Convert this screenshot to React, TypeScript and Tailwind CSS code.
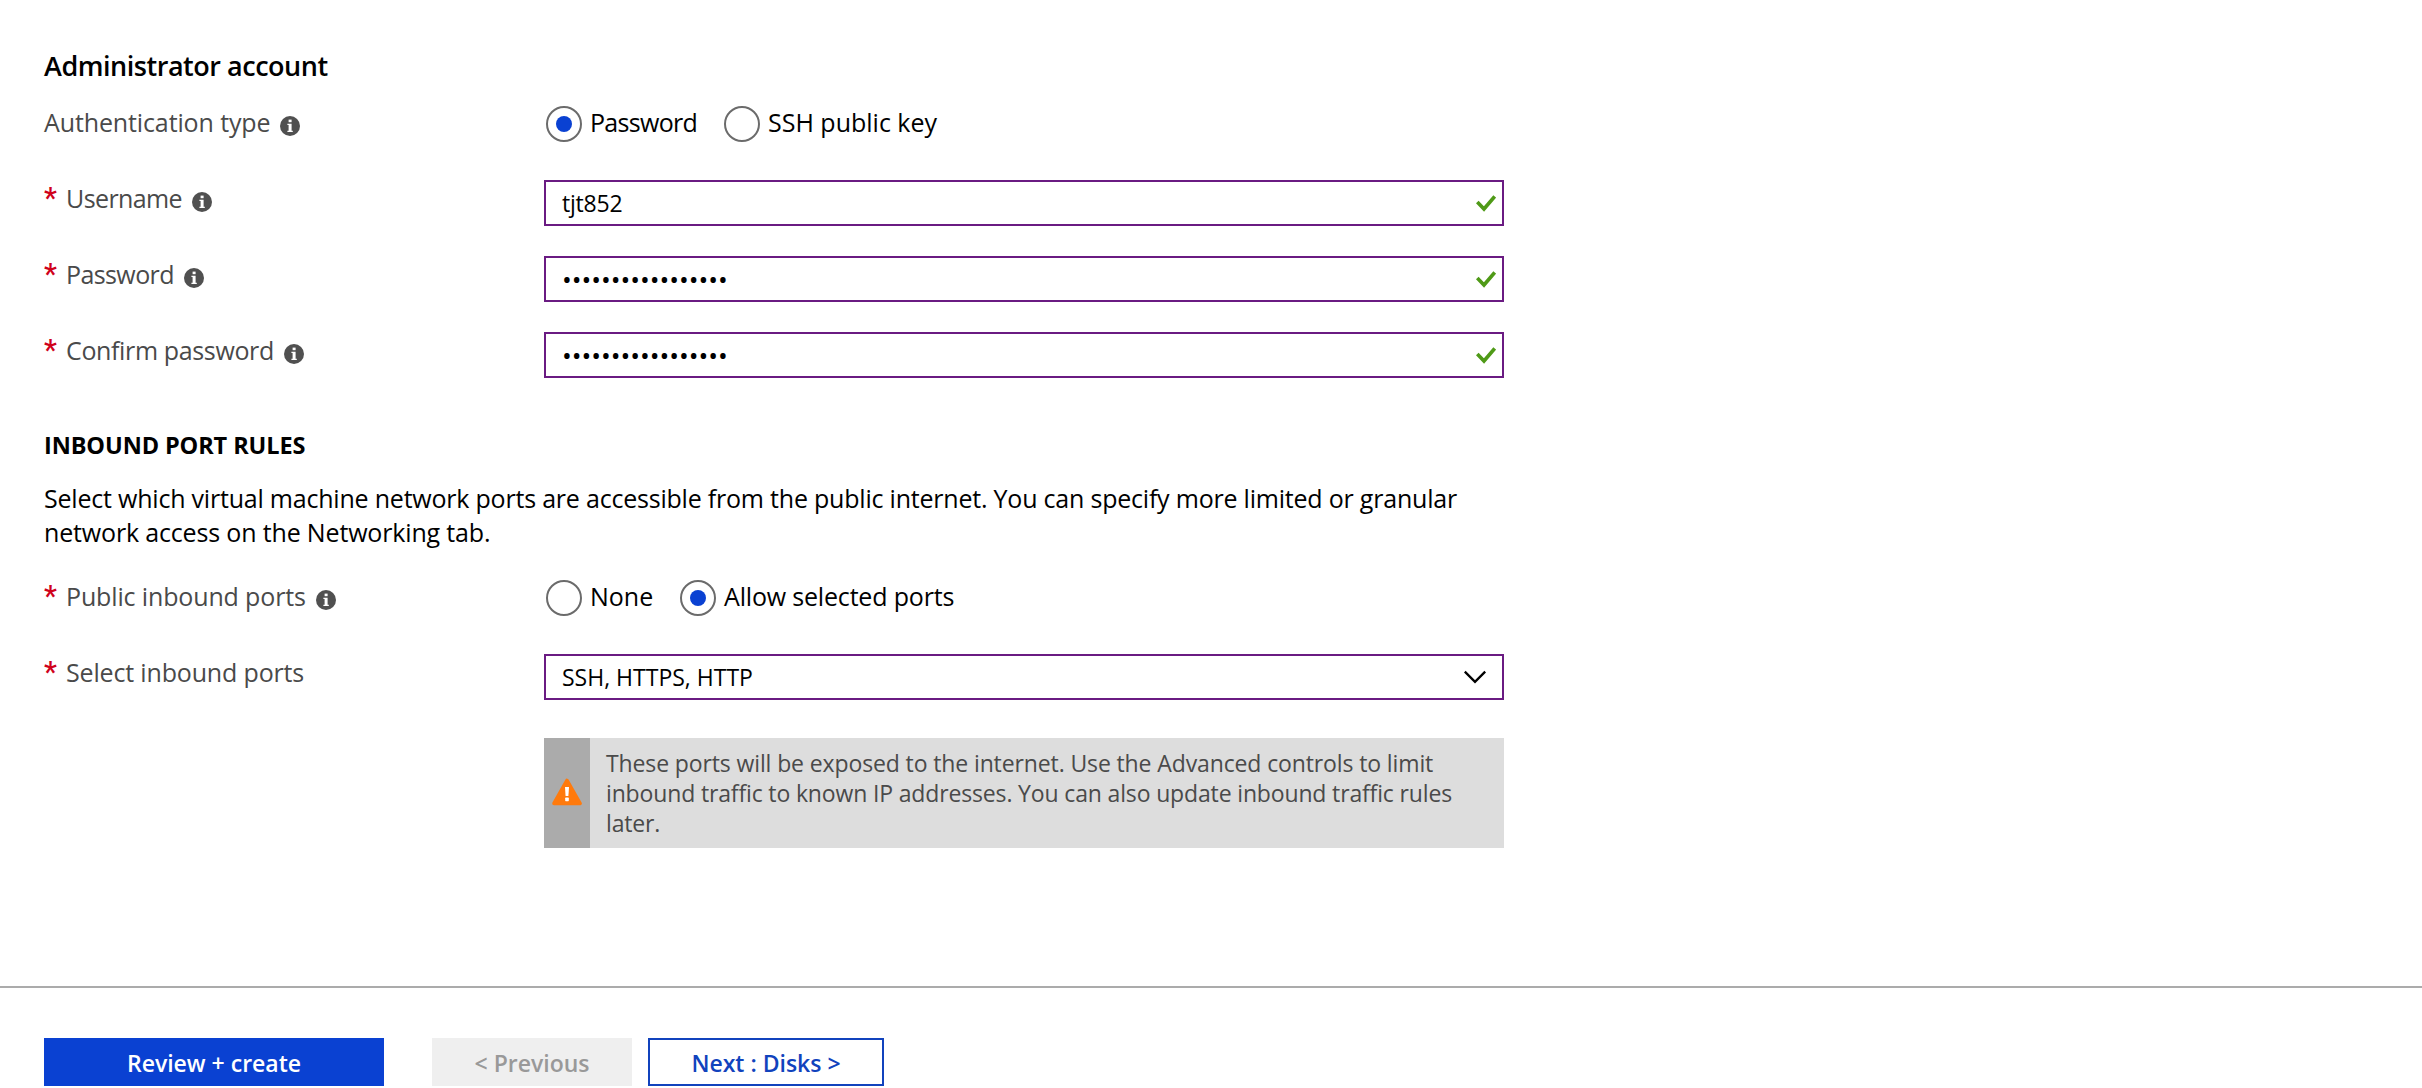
import type { ReactNode } from "react";

function InfoIcon() {
  return (
    <svg className="ml-2.5 mt-2 h-5 w-5 shrink-0" viewBox="0 0 20 20">
      <circle cx="10" cy="10" r="10" fill="#505050" />
      <rect x="8.6" y="3.6" width="3" height="2.600" fill="#fff" />
      <path d="M7.400 7.800h4.200v7h1.200v1.300H7.400v-1.300h1.200V9.100H7.400z" fill="#fff" />
    </svg>
  );
}

function CheckIcon() {
  return (
    <svg className="h-[18px] w-5" viewBox="0 0 20 18" fill="none" stroke="#4f9a17" strokeWidth="3.6">
      <path d="M1.300 7 8 14 18.700 1.500" />
    </svg>
  );
}

function ChevronIcon() {
  return (
    <svg className="h-3.5 w-[22px]" viewBox="0 0 22 14" fill="none" stroke="#000" strokeWidth="2.300">
      <path d="M.8 1.600 11 11.800 21.200 1.600" />
    </svg>
  );
}

function WarningIcon() {
  return (
    <svg className="mt-[-3px] h-7 w-[30px]" viewBox="0 0 30 28">
      <path d="M15 2.500 28 25.500H2z" fill="#ff7a0c" stroke="#ff7a0c" strokeWidth="3.600" strokeLinejoin="round" />
      <path d="M13 9h4l-.6 9h-2.800z" fill="#fff" />
      <rect x="13.200" y="19.600" width="3.600" height="3.600" rx=".6" fill="#fff" />
    </svg>
  );
}

function Label({ text, tracking, required, info }: { text: string; tracking: string; required?: boolean; info?: boolean }) {
  return (
    <div className="flex h-[34px] w-[500px] shrink-0 items-center text-[25px] leading-[34px] text-[#4a4a4a]">
      {required && (
        <span className="w-[22px] font-['Roboto',sans-serif] text-[29px] font-medium text-[#d0021b]">*</span>
      )}
      <span className={tracking}>{text}</span>
      {info && <InfoIcon />}
    </div>
  );
}

function Radio({ text, checked, className = "" }: { text: string; checked?: boolean; className?: string }) {
  return (
    <label className={`flex h-9 items-center ${className}`}>
      <span className="flex h-9 w-9 shrink-0 items-center justify-center rounded-full border-2 border-[#6b6b6b]">
        {checked && <span className="h-4 w-4 rounded-full bg-[#0a41d2]" />}
      </span>
      <span className="-mt-1 ml-2 whitespace-nowrap text-[25px] leading-[34px]">{text}</span>
    </label>
  );
}

function Field({ children, icon }: { children: ReactNode; icon: ReactNode }) {
  return (
    <div className="-mt-px flex h-[46px] w-[960px] items-center justify-between border-2 border-[#6a1b82] pl-4 text-[23px] leading-8">
      {children}
      {icon}
    </div>
  );
}

const dots = <span className="text-[26px] leading-8 tracking-[-0.02px]">{"•".repeat(17)}</span>;
const check = <span className="mr-1.5 pt-0.5"><CheckIcon /></span>;

export default function App() {
  return (
    <div className="h-[1088px] w-full overflow-hidden bg-white font-['Open_Sans',sans-serif] text-black">
      <main className="h-[986px] px-11 pt-[49px]">
        <h1 className="text-[27px] font-semibold leading-[33px] tracking-[-0.47px]">Administrator account</h1>

        <div className="mt-[23px] flex h-[37px]">
          <Label text="Authentication type" tracking="tracking-[-0.12px]" info />
          <div className="ml-0.5 mt-px flex">
            <Radio text="Password" checked className="w-[178px] tracking-[-0.7px]" />
            <Radio text="SSH public key" />
          </div>
        </div>

        <div className="mt-[39px] flex flex-col gap-[31px]">
          <div className="flex h-[45px]">
            <Label text="Username" tracking="tracking-[-0.6px]" required info />
            <Field icon={check}><span className="tracking-[-0.2px]">tjt852</span></Field>
          </div>
          <div className="flex h-[45px]">
            <Label text="Password" tracking="tracking-[-0.6px]" required info />
            <Field icon={check}>{dots}</Field>
          </div>
          <div className="flex h-[45px]">
            <Label text="Confirm password" tracking="tracking-[-0.36px]" required info />
            <Field icon={check}>{dots}</Field>
          </div>
        </div>

        <h2 className="mt-[51px] text-[23.5px] font-bold leading-8 tracking-[-0.1px]">INBOUND PORT RULES</h2>
        <p className="mt-5 text-[25px] leading-[34px] tracking-[-0.21px]">
          Select which virtual machine network ports are accessible from the public internet. You can specify more limited or granular
          <br />
          <span className="tracking-[-0.16px]">network access on the Networking tab.</span>
        </p>

        <div className="mt-[30px] flex h-[37px]">
          <Label text="Public inbound ports" tracking="tracking-[-0.14px]" required info />
          <div className="ml-0.5 mt-px flex">
            <Radio text="None" className="w-[134px]" />
            <Radio text="Allow selected ports" checked className="tracking-[-0.18px]" />
          </div>
        </div>

        <div className="mt-[39px] flex h-[45px]">
          <Label text="Select inbound ports" tracking="tracking-[-0.16px]" required />
          <Field icon={<span className="mr-4"><ChevronIcon /></span>}>SSH, HTTPS, HTTP</Field>
        </div>

        <div className="ml-[500px] mt-[38px] flex h-[110px] w-[960px] bg-[#dddddd]">
          <div className="flex w-[46px] items-center justify-center bg-[#ababab]">
            <WarningIcon />
          </div>
          <p className="whitespace-nowrap pl-4 pt-2.5 text-[23px] leading-[30px] tracking-[-0.15px] text-[#4a4a4a]">
            <span className="tracking-[-0.12px]">These ports will be exposed to the internet. Use the Advanced controls to limit</span>
            <br />
            inbound traffic to known IP addresses. You can also update inbound traffic rules
            <br />
            later.
          </p>
        </div>
      </main>

      <footer className="flex h-[102px] border-t-2 border-[#ababab] px-11 pt-[50px] text-[23px] font-semibold leading-8">
        <button className="h-12 w-[340px] bg-[#0a41d2] pt-0.5 text-white">Review + create</button>
        <button className="ml-12 h-12 w-[200px] bg-[#efefef] pt-0.5 text-[#999999]">&lt; Previous</button>
        <button className="ml-4 h-12 w-[236px] border-2 border-[#1143bd] pt-0.5 text-[#1143bd]">Next : Disks &gt;</button>
      </footer>
    </div>
  );
}
